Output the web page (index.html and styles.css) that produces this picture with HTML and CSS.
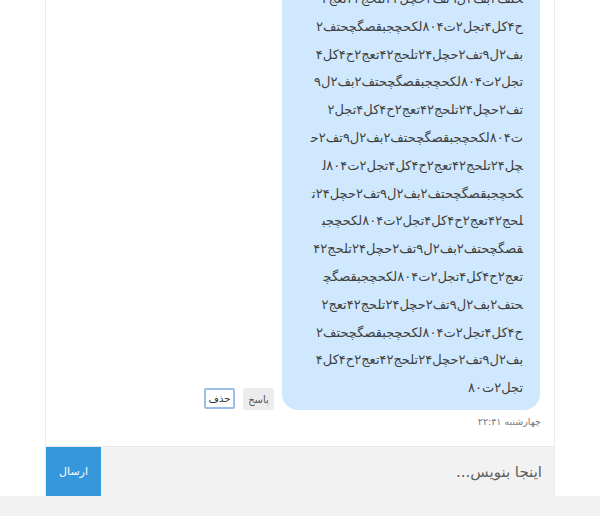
FILE: index.html
```html
<!DOCTYPE html>
<html lang="fa" dir="rtl">
<head>
<meta charset="utf-8">
<title>چت</title>
<link rel="stylesheet" href="styles.css">
</head>
<body>
<div class="page">
  <div class="chat">
    <div class="messages">
      <div class="msg">
        <div class="msg-row">
          <div class="bubble">تعج۲ح۴کل۴تجل۲ت۸۰۴لکحچجبقصگچ&zwj;<br>&zwj;حتف۲بف۲ل۹تف۲حچل۲۴تلحج۴۲تعج۲<br>ح۴کل۴تجل۲ت۸۰۴لکحچجبقصگچحتف۲<br>بف۲ل۹تف۲حچل۲۴تلحج۴۲تعج۲ح۴کل۴<br>تجل۲ت۸۰۴لکحچجبقصگچحتف۲بف۲ل۹<br>تف۲حچل۲۴تلحج۴۲تعج۲ح۴کل۴تجل۲<br>ت۸۰۴لکحچجبقصگچحتف۲بف۲ل۹تف۲ح&zwj;<br>&zwj;چل۲۴تلحج۴۲تعج۲ح۴کل۴تجل۲ت۸۰۴ل&zwj;<br>&zwj;کحچجبقصگچحتف۲بف۲ل۹تف۲حچل۲۴ت&zwj;<br>&zwj;لحج۴۲تعج۲ح۴کل۴تجل۲ت۸۰۴لکحچجب&zwj;<br>&zwj;قصگچحتف۲بف۲ل۹تف۲حچل۲۴تلحج۴۲<br>تعج۲ح۴کل۴تجل۲ت۸۰۴لکحچجبقصگچ&zwj;<br>&zwj;حتف۲بف۲ل۹تف۲حچل۲۴تلحج۴۲تعج۲<br>ح۴کل۴تجل۲ت۸۰۴لکحچجبقصگچحتف۲<br>بف۲ل۹تف۲حچل۲۴تلحج۴۲تعج۲ح۴کل۴<br>تجل۲ت۸۰</div>
          <div class="actions">
            <button class="btn btn-reply">پاسخ</button>
            <button class="btn btn-delete">حذف</button>
          </div>
        </div>
        <div class="time">چهارشنبه ۲۲:۴۱</div>
      </div>
    </div>
    <div class="composer">
      <div class="input">اینجا بنویس...</div>
      <button class="send">ارسال</button>
    </div>
  </div>
</div>
<div class="footer"></div>
</body>
</html>
```

FILE: styles.css
```css
html, body {
  margin: 0;
  padding: 0;
  background: #ffffff;
  font-family: "DejaVu Sans", sans-serif;
}

.page {
  direction: ltr;
  display: flex;
  justify-content: flex-start;
  padding-left: 45px;
}

.chat {
  width: 510px;
  box-sizing: border-box;
  border-left: 1px solid #ececec;
  border-right: 1px solid #ececec;
  background: #ffffff;
  direction: rtl;
}

.messages {
  height: 446px;
  overflow: hidden;
  display: flex;
  flex-direction: column;
  justify-content: flex-end;
  padding: 0 14px 17px 14px;
  box-sizing: border-box;
}

.msg {
  display: flex;
  flex-direction: column;
  align-items: flex-start;
}

.msg-row {
  display: flex;
  align-items: flex-end;
  gap: 8px;
}

.bubble {
  width: 258px;
  box-sizing: border-box;
  background: #cfe8fd;
  color: #3f3f3f;
  font-size: 13px;
  line-height: 27.8px;
  padding: 0 17px 8px 14px;
  border-radius: 0 0 16px 16px;
  white-space: nowrap;
}

.actions {
  display: flex;
  gap: 8px;
}

.btn {
  font-family: "DejaVu Sans", sans-serif;
  font-size: 10px;
  height: 22px;
  width: 31px;
  padding: 0;
  border-radius: 3px;
  color: #555;
}

.btn-reply {
  background: #ececec;
  border: none;
}

.btn-delete {
  background: #ffffff;
  border: 2px solid #9bbde8;
  border-radius: 2px;
  color: #333;
  height: 21px;
  margin-bottom: 1px;
}

.time {
  margin-top: 5px;
  margin-right: -1px;
  font-size: 9.5px;
  line-height: 14px;
  color: #777;
}

.composer {
  display: flex;
  height: 50px;
  border-top: 1px solid #e9e9e9;
  box-sizing: border-box;
}

.input {
  flex: 1;
  background: #f2f2f2;
  color: #5e5e5e;
  font-size: 15px;
  display: flex;
  align-items: center;
  padding-right: 12px;
}

.send {
  width: 55px;
  border: none;
  background: #3598dc;
  color: #ffffff;
  font-family: "DejaVu Sans", sans-serif;
  font-size: 11px;
  padding: 0;
}

.footer {
  height: 20px;
  background: #f1f1f1;
}
```
